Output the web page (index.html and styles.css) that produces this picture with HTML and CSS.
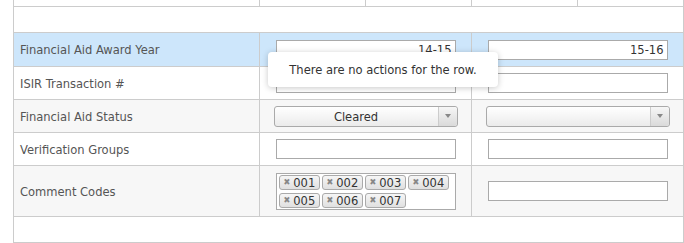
FILE: index.html
```html
<!DOCTYPE html>
<html>
<head>
  <link rel="stylesheet" href="styles.css">
</head>
<body>
  <div class="grid-wrap">
    <table class="grid">
      <colgroup>
        <col class="col-label">
        <col class="col-half">
        <col class="col-half">
        <col class="col-half">
        <col class="col-half">
      </colgroup>
      <tr class="row-head">
        <td></td><td></td><td></td><td></td><td></td>
      </tr>
      <tr class="row-blank">
        <td colspan="5"></td>
      </tr>
      <tr class="row row-selected">
        <td class="label">Financial Aid Award Year</td>
        <td class="field" colspan="2"><input class="text-input" value="14-15"></td>
        <td class="field" colspan="2"><input class="text-input" value="15-16"></td>
      </tr>
      <tr class="row">
        <td class="label">ISIR Transaction #</td>
        <td class="field" colspan="2"><input class="text-input" value=""></td>
        <td class="field" colspan="2"><input class="text-input" value=""></td>
      </tr>
      <tr class="row row-alt">
        <td class="label">Financial Aid Status</td>
        <td class="field" colspan="2">
          <div class="combo"><span class="combo-text">Cleared</span><span class="combo-arrow"></span></div>
        </td>
        <td class="field" colspan="2">
          <div class="combo"><span class="combo-text"></span><span class="combo-arrow"></span></div>
        </td>
      </tr>
      <tr class="row">
        <td class="label">Verification Groups</td>
        <td class="field" colspan="2"><input class="text-input" value=""></td>
        <td class="field" colspan="2"><input class="text-input" value=""></td>
      </tr>
      <tr class="row row-alt row-tall">
        <td class="label">Comment Codes</td>
        <td class="field" colspan="2">
          <div class="multi">
            <span class="tag"><span class="tag-x">&#10006;</span>001</span>
            <span class="tag"><span class="tag-x">&#10006;</span>002</span>
            <span class="tag"><span class="tag-x">&#10006;</span>003</span>
            <span class="tag"><span class="tag-x">&#10006;</span>004</span>
            <span class="tag"><span class="tag-x">&#10006;</span>005</span>
            <span class="tag"><span class="tag-x">&#10006;</span>006</span>
            <span class="tag"><span class="tag-x">&#10006;</span>007</span>
          </div>
        </td>
        <td class="field" colspan="2"><input class="text-input" value=""></td>
      </tr>
      <tr class="row-blank">
        <td colspan="5"></td>
      </tr>
    </table>

    <div class="row-tooltip">There are no actions for the row.</div>
  </div>
</body>
</html>
```

FILE: styles.css
```css
body {
  margin: 0;
  font-family: "DejaVu Sans Condensed", "DejaVu Sans", sans-serif;
  font-size: 12.8px;
  color: #555;
  background: #fff;
}
.grid-wrap {
  position: relative;
  height: 243px;
  overflow: hidden;
  padding-left: 13px;
}
.grid {
  border-collapse: collapse;
  table-layout: fixed;
  width: 671px;
  margin-top: -20px;
}
.grid td {
  border: 1px solid #ccc;
  padding: 0;
  vertical-align: middle;
}
.col-label {
  width: 246px;
}
.col-half {
  width: 106px;
}
.row-head, .row-blank {
  height: 26px;
}
.row {
  height: 33px;
}
.row-selected {
  height: 34px;
}
.row-tall {
  height: 51px;
}
.row-selected td {
  background: #cde6fb;
}
.row-alt td {
  background: #f7f7f7;
}
.label {
  padding-left: 6px !important;
  white-space: nowrap;
}
.field {
  text-align: center;
}
.text-input {
  display: block;
  width: 180px;
  height: 20px;
  margin: 0 auto;
  box-sizing: border-box;
  border: 1px solid #aaa;
  padding: 0 3px;
  font: inherit;
  color: #333;
  text-align: right;
  background: #fff;
}
.combo {
  display: flex;
  width: 184px;
  height: 21px;
  margin: 0 auto;
  box-sizing: border-box;
  border: 1px solid #aaa;
  border-radius: 3px;
  background: linear-gradient(#fff, #ebebeb);
  color: #333;
}
.combo-text {
  flex: 1;
  line-height: 19px;
  text-align: center;
}
.combo-arrow {
  width: 18px;
  display: flex;
  align-items: center;
  justify-content: center;
  border-left: 1px solid #ccc;
  border-radius: 0 3px 3px 0;
  background: linear-gradient(#f6f6f6, #dadada);
}
.combo-arrow::after {
  content: "";
  border-left: 3px solid transparent;
  border-right: 3px solid transparent;
  border-top: 4px solid #888;
}
.multi {
  display: flex;
  flex-wrap: wrap;
  gap: 3px 2px;
  width: 180px;
  margin: 0 auto;
  box-sizing: border-box;
  border: 1px solid #aaa;
  padding: 1px 1px 1px 2px;
  background: #fff;
}
.tag {
  display: inline-flex;
  align-items: center;
  width: 41px;
  height: 15px;
  box-sizing: border-box;
  border: 1px solid #aaa;
  border-radius: 3px;
  padding: 0 0 0 4px;
  background: linear-gradient(#f6f6f6, #e0e0e0);
  color: #333;
  line-height: 13px;
}
.tag-x {
  font-size: 9px;
  color: #888;
  margin-right: 3px;
}
.row-tooltip {
  position: absolute;
  left: 268px;
  top: 52px;
  width: 230px;
  height: 35px;
  box-sizing: border-box;
  background: #fff;
  border-radius: 4px;
  box-shadow: 0 1px 6px rgba(0, 0, 0, 0.22);
  color: #333;
  line-height: 35px;
  text-align: center;
}
```
